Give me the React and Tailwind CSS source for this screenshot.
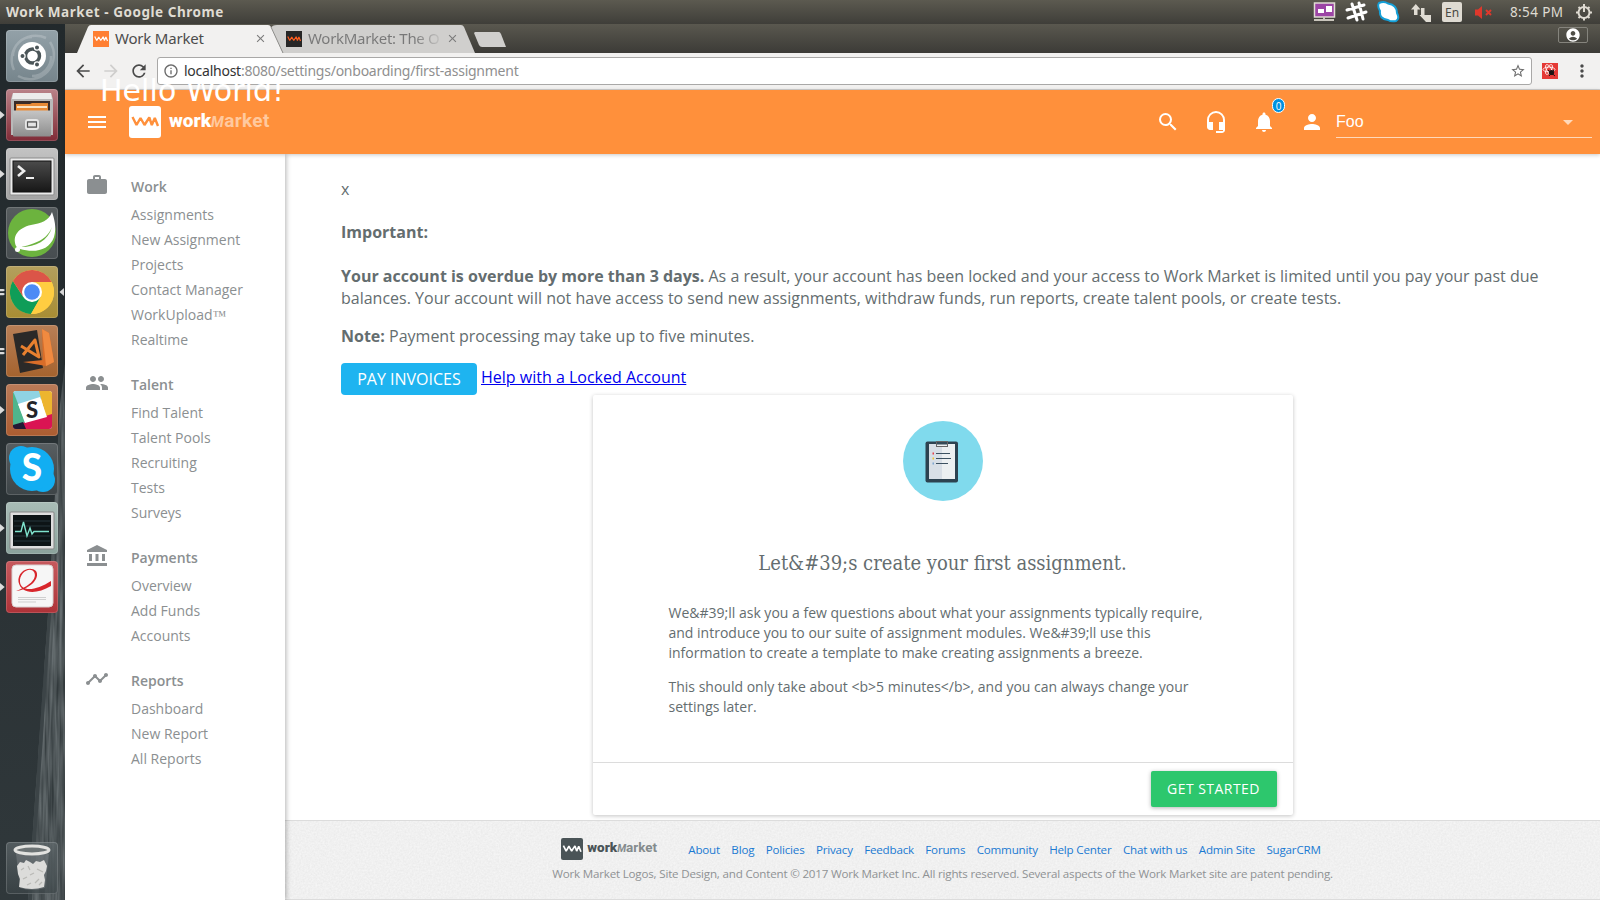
import React from "react";
import {
  MdMenu, MdSearch, MdHeadsetMic, MdNotifications, MdPerson, MdArrowDropDown, MdWork, MdPeople,
  MdAccountBalance, MdTimeline, MdInfoOutline, MdStarBorder, MdArrowBack, MdArrowForward, MdRefresh,
  MdMoreVert, MdAccountCircle, MdClose,
} from "react-icons/md";

const groups = [
  { title: "Work", Icon: MdWork, items: ["Assignments", "New Assignment", "Projects", "Contact Manager", "WorkUpload™", "Realtime"] },
  { title: "Talent", Icon: MdPeople, items: ["Find Talent", "Talent Pools", "Recruiting", "Tests", "Surveys"] },
  { title: "Payments", Icon: MdAccountBalance, items: ["Overview", "Add Funds", "Accounts"] },
  { title: "Reports", Icon: MdTimeline, items: ["Dashboard", "New Report", "All Reports"] },
];

const footerLinks = ["About", "Blog", "Policies", "Privacy", "Feedback", "Forums", "Community", "Help Center", "Chat with us", "Admin Site", "SugarCRM"];

function WmMark({ bg, fg, radius, className }) {
  return (
    <svg viewBox="0 0 32 32" className={className}>
      <rect width="32" height="32" rx={radius} fill={bg} />
      <path d="M3.500 11 L7.500 19 L11.500 12 L15.500 19 L20.300 11.500 L22.800 19 L25.800 12 L29 20" fill="none" stroke={fg} strokeWidth="2.400" strokeLinejoin="bevel" />
    </svg>
  );
}

function UbuntuIcon() {
  return (
    <g>
      <path d="M8 40 A24 24 0 0 1 40 8 M44 12 A24 24 0 0 1 12 46 M7 26 A19 19 0 0 1 26 7 M45 26 A19 19 0 0 1 26 46" fill="none" stroke="#fff" strokeOpacity=".2" strokeWidth="2.500" />
      <circle cx="26" cy="26" r="14" fill="#fff" />
      <circle cx="26.500" cy="26" r="7" fill="none" stroke="#4b5558" strokeWidth="3.400" />
      <g fill="#4b5558" stroke="#fff" strokeWidth="1.200">
        <circle cx="16.500" cy="26" r="2.600" /><circle cx="31" cy="17.500" r="2.600" /><circle cx="31" cy="34.500" r="2.600" />
      </g>
    </g>
  );
}
function FilesIcon() {
  return (
    <g>
      <path d="M7 4 H45 L47 10 V46 H5 V10 Z" fill="#b9b9b9" />
      <path d="M7 4 H45 L46 10 H6 Z" fill="#ececec" />
      <rect x="8" y="12" width="36" height="10" fill="#3a2c28" />
      <path d="M10 15 H24 L26 14 H42 V22 H10 Z" fill="#e98a35" />
      <rect x="11" y="17" width="30" height="2" fill="#fbe3c3" />
      <rect x="7" y="21.500" width="38" height="26" rx="1" fill="url(#steel)" />
      <rect x="20" y="31" width="12" height="9" rx="2" fill="none" stroke="#e6e6e6" strokeWidth="2" />
      <rect x="21.500" y="33" width="9" height="5" fill="#e4e4e4" stroke="#555" strokeWidth="1.200" />
    </g>
  );
}
function TerminalIcon() {
  return (
    <g>
      <rect x="4" y="10" width="44" height="37" rx="1" fill="#ebebeb" stroke="#8b8b8b" />
      <rect x="7" y="13" width="38" height="31" fill="url(#screen)" stroke="#111" />
      <path d="M12 18 L18 23 L12 28" fill="none" stroke="#eee" strokeWidth="2.600" />
      <rect x="20" y="29" width="8" height="2" fill="#eee" />
    </g>
  );
}
function LeafIcon() {
  return (
    <g>
      <circle cx="26" cy="26" r="24" fill="#6cb33e" />
      <path d="M46 5 C43 14 35 16 25 18 C12 21 6 29 10 39 Q11 41 14 42 C28 46 43 44 48 30 C51 20 48 11 46 5 Z" fill="#fff" />
      <path d="M46 20 C42 30 34 36 15 40 C30 40 42 34 46 20 Z" fill="#6cb33e" />
      <circle cx="11.500" cy="42.500" r="2.500" fill="#fff" />
    </g>
  );
}
function ChromeIcon() {
  return (
    <g>
      <circle cx="26" cy="26" r="22" fill="#ffcd41" />
      <path d="M6.900 15 A22 22 0 0 0 25 48 L34.700 31 L26 36 L17.300 31 Z" fill="#0f9d58" />
      <path d="M26 16 H45.600 A22 22 0 0 1 25 48 L34.700 31 Z" fill="#ffcd41" />
      <path d="M6.900 15 A22 22 0 0 1 45.600 16 H26 L17.300 31 Z" fill="#db5548" />
      <circle cx="26" cy="26" r="10" fill="#fff" />
      <circle cx="26" cy="26" r="7.800" fill="#4c8bf5" />
    </g>
  );
}
function CodeIcon() {
  return (
    <g>
      <path d="M7 9 L31 5 L37 43 L14 48 Z" fill="#2b2928" />
      <path d="M36 4 L43 8 L48 37 L40 41 L17 37 L37 35 Z" fill="#d96d29" />
      <path d="M36 4 L43 8 L48 37 L40 41 Z" fill="#f08a40" />
      <path d="M15 21 L33 32 L29 15 L17 30" fill="none" stroke="#e8802f" strokeWidth="3" strokeLinejoin="round" />
    </g>
  );
}
function SlackIcon() {
  return (
    <g>
      <clipPath id="slackClip"><rect x="7" y="7" width="39" height="38" rx="3" /></clipPath>
      <g clipPath="url(#slackClip)">
        <rect x="7" y="7" width="39" height="38" fill="#fff" />
        <path d="M7 7 H35 L38 14 L7 22 Z" fill="#8fd3e3" />
        <path d="M7 7 L22 45 H7 Z" fill="#4fb58c" />
        <path d="M33 7 H46 V31 L40 33 Z" fill="#edb52f" />
        <path d="M7 42 L46 30 V45 H7 Z" fill="#da1453" />
        <path d="M7 41 L17 38 L20 45 H7 Z" fill="#241a35" />
        <path d="M12 20 L34 13 L41 33 L19 39 Z" fill="#fff" />
      </g>
      <text x="26" y="34" textAnchor="middle" fontFamily="Lato" fontWeight="900" fontSize="22" fill="#242428">S</text>
    </g>
  );
}
function SkypeIcon() {
  return (
    <g>
      <circle cx="15" cy="15" r="12" fill="#12aef2" /><circle cx="37" cy="37" r="12" fill="#12aef2" />
      <circle cx="26" cy="26" r="22" fill="#12aef2" />
      <text x="26" y="38" textAnchor="middle" fontFamily="Lato" fontWeight="900" fontSize="37" fill="#fff">S</text>
    </g>
  );
}
function MonitorIcon() {
  return (
    <g>
      <rect x="4" y="10" width="44" height="37" rx="1" fill="#dedede" stroke="#858585" />
      <rect x="7" y="13" width="38" height="31" fill="#0d1416" />
      <path d="M8 19 H44 M8 24 H44 M8 34 H44 M8 39 H44" stroke="#26343a" />
      <path d="M9 29.500 H15 L17.500 20 L21 34 L24 26 L26 32 L28 29.500 H43" fill="none" stroke="#7fe3cd" strokeWidth="1.400" />
    </g>
  );
}
function ReaderIcon() {
  return (
    <g>
      <rect x="6" y="4" width="41" height="42" rx="4" fill="#f6f6f6" stroke="#d8d0d0" />
      <path d="M10 30 C22 26 32 18 28 11 C24 5 13 12 14 21 C15 31 30 30 45 20 V25 C30 34 15 33 12.500 21 C11 10 24 4 30 10 C35 18 22 29 10 30 Z" fill="#d8262c" />
      <path d="M12 36.500 H40 M12 38.500 H40 M12 41 H30" stroke="#cfcfcf" strokeWidth="1" />
    </g>
  );
}
function TrashIcon() {
  return (
    <g>
      <path d="M10 12 L14 46 Q26 50 39 46 L43 12 Z" fill="#9ba0a1" fillOpacity=".3" />
      <path d="M11 24 L14 20 L18 21 L20 18 L24 20 L27 22 L30 19 L34 20 L38 18 L41 24 L40 29 L38 33 L39 38 L38 45 Q26 49 13 45 L14 37 L12 32 Z" fill="#dcdcda" />
      <path d="M15 28 L18 26 M22 24 L24 28 M24 33 L28 31 M31 27 L37 30 M17 37 L21 35 M29 41 L33 37 M21 43 L25 41 M33 43 L36 40" stroke="#b9b9b5" strokeWidth="1.200" fill="none" />
      <ellipse cx="26" cy="8" rx="17" ry="4" fill="#6c7374" stroke="#e2e2df" strokeWidth="3" />
    </g>
  );
}

const launcher = [
  { Icon: UbuntuIcon, tile: "from-[#93a1a8] to-[#76858c]" },
  { Icon: FilesIcon, tile: "from-[#b98289] to-[#7f2a37]", mark: "run" },
  { Icon: TerminalIcon, tile: "from-[#c3c3c3] to-[#a3a3a3]", mark: "run" },
  { Icon: LeafIcon, tile: "from-[#565c5e] to-[#474d50]" },
  { Icon: ChromeIcon, tile: "from-[#b39f5d] to-[#a88d33]", mark: "multi", active: true },
  { Icon: CodeIcon, tile: "from-[#b87f56] to-[#a5632e]", mark: "multi" },
  { Icon: SlackIcon, tile: "from-[#b97b58] to-[#ac5d31]", mark: "run" },
  { Icon: SkypeIcon, tile: "from-[#585e61] to-[#3d4447]" },
  { Icon: MonitorIcon, tile: "from-[#a9bdb7] to-[#8ba39c]", mark: "run" },
  { Icon: ReaderIcon, tile: "from-[#c5595d] to-[#ad3238]", mark: "run" },
];

function Tile({ Icon, tile, mark, active }) {
  return (
    <div className="flex h-[52px] w-[65px] items-center">
      <div className="w-1.5 shrink-0">
        <svg viewBox="0 0 6 12" className="h-3 w-[6px]">
          {mark === "run" && <path d="M0 2 L4.700 6 L0 10 Z" fill="#dcdcdc" />}
          {mark === "multi" && <path d="M0 3 H3.500 L5 4 L3.500 5.200 H0 Z M0 7 H3.500 L5 8 L3.500 9.200 H0 Z" fill="#dcdcdc" />}
        </svg>
      </div>
      <div className={`h-[52px] w-[52px] shrink-0 rounded bg-linear-to-b ${tile} shadow-[inset_0_0_0_1px_rgba(255,255,255,0.16)]`}>
        <svg viewBox="0 0 52 52" className="h-full w-full"><Icon /></svg>
      </div>
      <svg viewBox="0 0 7 12" className="h-3 w-[7px]">{active && <path d="M6 2 L1.500 6 L6 10 Z" fill="#dcdcdc" />}</svg>
    </div>
  );
}

function Launcher() {
  return (
    <aside className="relative flex w-[65px] shrink-0 flex-col justify-between bg-linear-to-b from-[#22292c] to-[#30383b] pt-1.5 pb-1.5">
      <svg viewBox="0 0 65 876" className="absolute inset-0 h-full w-full" preserveAspectRatio="none">
        <defs>
          <linearGradient id="steel" x1="0" x2="0" y1="0" y2="1"><stop offset="0" stopColor="#c5c5c5" /><stop offset="1" stopColor="#8d8d8d" /></linearGradient>
          <linearGradient id="screen" x1="0" x2="0" y1="0" y2="1"><stop offset="0" stopColor="#4b4b4b" /><stop offset="1" stopColor="#171717" /></linearGradient>
          <filter id="grain" x="0" y="0" width="1" height="1" colorInterpolationFilters="sRGB">
            <feTurbulence type="fractalNoise" baseFrequency="0.35 0.02" numOctaves="2" result="n" />
            <feColorMatrix in="n" type="matrix" values="0.35 0 0 0 0.13 0.35 0 0 0 0.16 0.35 0 0 0 0.17 0 0 0 0 1" result="g" />
            <feComposite in="g" in2="SourceGraphic" operator="in" />
          </filter>
        </defs>
        <path d="M60 380 L65 340 V876 H28 L49 576 Z" fill="#4d5558" filter="url(#grain)" />
        <path d="M49 576 L28 876 H32 L52 576 Z" fill="#3c4447" />
      </svg>
      <div className="relative flex flex-col gap-[7px]">
        {launcher.map((entry, i) => <Tile key={i} {...entry} />)}
      </div>
      <div className="relative">
        <Tile Icon={TrashIcon} tile="from-[#626b6e]/70 to-[#3c4548]/70" />
      </div>
    </aside>
  );
}

function SystemBar() {
  return (
    <div className="flex h-6 shrink-0 items-center justify-between bg-linear-to-b from-[#5c5a50] to-[#3f3e39] pr-1.5 pl-1.5 font-['Noto_Sans',sans-serif] text-[#dfdbd2]">
      <span className="text-[13.500px] font-bold tracking-[0.540px] whitespace-nowrap">Work Market - Google Chrome</span>
      <svg viewBox="1310 0 284 24" className="h-6 w-[284px]">
        <rect x="1314.500" y="3" width="20" height="14" fill="#9c45a5" stroke="#e0dcd3" strokeWidth="1.500" />
        <rect x="1318" y="9" width="6" height="4" fill="#fff" /><rect x="1326" y="6" width="6" height="6" fill="#fff" />
        <path d="M1324 17 V19 M1314 20 H1334" stroke="#c9c5bc" strokeWidth="2" />
        <path d="M1352 4 L1357 20 M1359 3 L1363 19 M1347 10 L1364 5 M1348 18 L1366 12" stroke="#fff" strokeWidth="3" strokeLinecap="round" />
        <path d="M1379 3 Q1384 1 1388 3.500 Q1397 5 1397 13 Q1400 19 1396 21 Q1391 22 1388 20 Q1379 19 1380 11 Q1377 6 1379 3 Z" fill="#fff" stroke="#15a0d8" strokeWidth="2" />
        <path d="M1411 9.500 L1415.800 4 L1420.500 9.500 H1417.500 V15 H1414 V9.500 Z" fill="#e0dcd3" />
        <path d="M1421 8 H1424.500 V15 H1427 L1431 15 V22 H1426 L1419.500 15 H1421 Z" fill="#e0dcd3" />
        <rect x="1442" y="2" width="20" height="20" rx="2" fill="#dfdbd2" />
        <text x="1452" y="17" textAnchor="middle" fontFamily="Noto Sans" fontSize="12" fill="#4a4943">En</text>
        <path d="M1475 9.500 H1478 L1482 6 V19 L1478 15.500 H1475 Z" fill="#df382c" />
        <path d="M1486 10 L1491 15 M1491 10 L1486 15" stroke="#df382c" strokeWidth="2" />
        <text x="1510" y="17.300" fontFamily="Noto Sans" fontSize="13.500" textLength="53" fill="#dfdbd2">8:54 PM</text>
        <circle cx="1584" cy="12.500" r="5.500" fill="none" stroke="#dfdbd2" strokeWidth="2" />
        <path d="M1584 4 V12 M1576 12.500 H1579 M1589 12.500 H1592 M1578.500 18 L1580 16.500 M1589.500 18 L1588 16.500 M1584 18 V20.500 M1578.500 7 L1580 8.500 M1589.500 7 L1588 8.500" stroke="#dfdbd2" strokeWidth="2" />
      </svg>
    </div>
  );
}

function TabStrip() {
  return (
    <div className="relative flex h-[29px] shrink-0 bg-linear-to-b from-[#5a584f] to-[#3c3b37] pl-3 font-['Noto_Sans',sans-serif] text-[15px]">
      <svg viewBox="65 24 460 29" className="absolute top-0 left-0 h-[29px] w-[460px]">
        <path d="M283 53 L271 28 Q272 25 277 25 H461 Q463 25 464 27 L475 53 Z" fill="#d0cfcd" />
        <path d="M77 53 L88 27 Q89 25 91 25 H268 Q270 25 271 27 L283 53 Z" fill="#f2f1f0" />
        <path d="M271 27 L283 53" stroke="#8f8e8b" />
        <path d="M475 32 H499 Q500 32 501 34 L506 47 H482 Q480 47 479 45 L474 33 Z" fill="#d0cfcd" />
      </svg>
      <div className="relative flex h-full w-[194px] items-center pl-4">
        <WmMark bg="#ff7f32" fg="#fff" radius="0" className="h-4 w-4" />
        <span className="ml-1.5 w-[139px] tracking-[-0.200px] text-[#4c4c4c]">Work Market</span>
        <MdClose className="h-[13px] w-[13px] text-[#7b7b7b]" />
      </div>
      <div className="relative flex h-full w-[200px] items-center pl-[15px]">
        <WmMark bg="#262626" fg="#ff5e1f" radius="0" className="h-4 w-4" />
        <span className="ml-1.5 w-[133px] bg-linear-to-r from-[#787878] from-80% to-[#787878]/10 bg-clip-text tracking-[-0.300px] whitespace-nowrap text-transparent">WorkMarket: The O</span>
        <MdClose className="ml-[5px] h-[13px] w-[13px] text-[#7b7b7b]" />
      </div>
      <div className="mt-[3px] mr-3 ml-auto flex h-4 w-[30px] items-center justify-center rounded-[2px] border border-[#85847d]">
        <MdAccountCircle className="h-4 w-4 text-white" />
      </div>
    </div>
  );
}

function Toolbar() {
  return (
    <div className="flex h-[37px] shrink-0 items-center border-b border-[#d0cfce] bg-[#f2f1f0] pl-2 font-['Noto_Sans',sans-serif] text-[#4a4a4a]">
      <MdArrowBack className="h-5 w-5" />
      <MdArrowForward className="ml-2 h-5 w-5 text-[#cfcecd]" />
      <MdRefresh className="ml-2 h-5 w-5" />
      <div className="ml-2 flex h-7 w-[1375px] items-center rounded-[3px] border border-[#a9a8a7] bg-white pr-[5px] pl-[5px]">
        <MdInfoOutline className="h-4 w-4 text-[#6a6a6a]" />
        <span className="ml-[5px] flex-1 pb-0.5 text-[14px] tracking-[-0.250px] text-[#8f8f8f]"><span className="text-[#333]">localhost</span>:8080/settings/onboarding/first-assignment</span>
        <MdStarBorder className="h-4 w-4 text-[#6d6d6d]" />
      </div>
      <svg viewBox="0 0 16 16" className="ml-2.5 h-4 w-4">
        <rect width="16" height="16" fill="#e53935" />
        <g fill="none" stroke="#fff" strokeWidth=".8"><ellipse cx="7" cy="6.500" rx="6" ry="2.400" /><ellipse cx="7" cy="6.500" rx="5.500" ry="2.400" transform="rotate(60 7 6.500)" /><ellipse cx="7" cy="6.500" rx="5.500" ry="2.400" transform="rotate(120 7 6.500)" /></g>
        <circle cx="9.500" cy="9.500" r="2.600" fill="#1d1313" /><path d="M6 7 L13 13 M12 7 L7 13" stroke="#1d1313" />
      </svg>
      <MdMoreVert className="ml-3.5 h-5 w-5" />
    </div>
  );
}

function AppHeader() {
  return (
    <header className="relative z-10 flex h-16 shrink-0 items-center bg-[#ff903b] pl-5 text-white shadow-[0_1px_4px_rgba(0,0,0,0.22)]">
      <MdMenu className="h-6 w-6" />
      <WmMark bg="#fff" fg="#ff903b" radius="3" className="ml-5 h-8 w-8" />
      <div className="-mt-0.5 ml-2 flex items-baseline font-['Roboto',sans-serif] text-[19px] leading-5 font-bold">
        <span className="font-black">work</span>
        <span className="tracking-[0.350px] text-[#ffc99f]"><span className="text-[15px] italic">M</span>arket</span>
      </div>
      <span className="absolute top-[-17px] left-[35px] font-['DejaVu_Sans',sans-serif] text-[30px] leading-9 tracking-[0.050px] whitespace-nowrap">Hello World!</span>
      <div className="ml-auto flex items-center">
        <MdSearch className="h-6 w-6" />
        <MdHeadsetMic className="ml-6 h-6 w-6" />
        <div className="relative ml-6">
          <MdNotifications className="h-6 w-6" />
          <span className="absolute -top-3 left-5 flex h-[15px] w-[13px] items-center justify-center rounded-full border border-white bg-[#0091e0] font-['Open_Sans',sans-serif] text-[10px] leading-none">0</span>
        </div>
        <MdPerson className="ml-6 h-6 w-6" />
        <div className="mr-2 ml-3 flex h-[31px] w-64 items-center justify-between border-b border-[#ffd9bb] pr-3 font-['Liberation_Sans',sans-serif] text-base">
          <span>Foo</span>
          <MdArrowDropDown className="h-6 w-6 text-[#ffd9bb]" />
        </div>
      </div>
    </header>
  );
}

function Sidebar() {
  return (
    <nav className="z-[5] w-[220px] shrink-0 bg-white pt-[18px] text-sm text-[#8b8f91] shadow-[1px_0_5px_rgba(0,0,0,0.3)]">
      {groups.map(({ title, Icon, items }) => (
        <section key={title} className="mb-[18px] flex pl-5">
          <Icon className="mt-px h-6 w-6 shrink-0" />
          <div className="ml-[22px]">
            <h2 className="h-[30px] leading-[30px] font-semibold">{title}</h2>
            <ul>
              {items.map((item) => (
                <li key={item} className="h-[25px] leading-[25px]">
                  {item.replace("™", "")}
                  {item.endsWith("™") && <span className="font-['Liberation_Serif',serif]">™</span>}
                </li>
              ))}
            </ul>
          </div>
        </section>
      ))}
    </nav>
  );
}

function Clipboard() {
  return (
    <svg viewBox="0 0 80 80" className="h-20 w-20">
      <circle cx="40" cy="40" r="40" fill="#80daed" />
      <rect x="22.500" y="20.500" width="32.500" height="41" rx="2" fill="#2c4250" />
      <rect x="26" y="23" width="13" height="35" fill="#d8dfe6" />
      <rect x="39" y="23" width="13" height="35" fill="#ecf0f1" />
      <rect x="33.500" y="20.500" width="11" height="5" fill="#ecf0f1" stroke="#666" />
      <rect x="34" y="21" width="10" height="2.500" fill="#344a57" />
      <path d="M33 32.500 H47 M33 37.500 H48 M33 42.500 H45" stroke="#3c5261" />
      <rect x="29.500" y="31.500" width="1.500" height="2" fill="#e5404b" /><rect x="29.500" y="36.500" width="1.500" height="2" fill="#f4c430" /><rect x="29.500" y="41.500" width="1.500" height="2" fill="#7ea6d0" />
    </svg>
  );
}

function OnboardingCard() {
  return (
    <div className="mx-auto flex h-[420px] w-[700px] flex-col rounded-[2px] bg-white shadow-[0_1px_4px_rgba(0,0,0,0.24)]">
      <div className="flex flex-1 flex-col items-center pt-[26px]">
        <Clipboard />
        <h1 className="mt-[47px] font-['DejaVu_Serif_Condensed','DejaVu_Serif',serif] text-[20px] leading-[30px] whitespace-nowrap">Let&amp;#39;s create your first assignment.</h1>
        <div className="mt-[25px] ml-0.5 w-[550px] text-sm leading-5">
          <p>We&amp;#39;ll ask you a few questions about what your assignments typically require, and introduce you to our suite of assignment modules. We&amp;#39;ll use this information to create a template to make creating assignments a breeze.</p>
          <p className="mt-3.5">This should only take about &lt;b&gt;5 minutes&lt;/b&gt;, and you can always change your settings later.</p>
        </div>
      </div>
      <div className="flex h-[53px] items-start justify-end border-t border-[#dcdcdc] pt-2 pr-4">
        <button className="h-9 w-[126px] rounded-[2px] bg-[#2dc76d] text-sm tracking-[0.450px] text-white shadow-[0_1px_4px_rgba(0,0,0,0.3)]">GET STARTED</button>
      </div>
    </div>
  );
}

function Footer() {
  return (
    <footer className="relative flex h-20 shrink-0 flex-col items-center border-t border-b border-[#dcdcdc] bg-[#f8f8f8] pt-[17px] text-[11.600px] tracking-[-0.190px]">
      <svg className="absolute inset-0 h-full w-full opacity-[0.060]">
        <filter id="paper" colorInterpolationFilters="sRGB"><feTurbulence type="fractalNoise" baseFrequency="0.55" numOctaves="2" /><feColorMatrix type="matrix" values="1 0 0 0 0 1 0 0 0 0 1 0 0 0 0 0 0 0 0 1" /></filter>
        <rect width="100%" height="100%" filter="url(#paper)" />
      </svg>
      <div className="relative mr-[3px] flex h-[22px] items-center">
        <WmMark bg="#4a5457" fg="#fff" radius="3" className="h-[22px] w-[22px]" />
        <div className="-mt-0.5 ml-1 flex w-[72px] items-baseline font-['Roboto',sans-serif] text-[13.500px] leading-4 font-bold tracking-normal">
          <span className="font-black text-[#4a5457]">work</span>
          <span className="text-[#848b8d]"><span className="text-[10.500px] italic">M</span>arket</span>
        </div>
        <div className="mt-px ml-[29px] flex gap-[11.400px] text-[#1b7ad2]">
          {footerLinks.map((link) => <a key={link} className="whitespace-nowrap">{link}</a>)}
        </div>
      </div>
      <p className="relative mt-1 leading-5 text-[#8f9294]">Work Market Logos, Site Design, and Content © 2017 Work Market Inc. All rights reserved. Several aspects of the Work Market site are patent pending.</p>
    </footer>
  );
}

export default function App() {
  return (
    <div className="flex h-[900px] w-[1600px] flex-col overflow-hidden bg-white">
      <SystemBar />
      <div className="flex min-h-0 flex-1">
        <Launcher />
        <div className="flex min-w-0 flex-1 flex-col">
          <TabStrip />
          <Toolbar />
          <AppHeader />
          <div className="flex min-h-0 flex-1 font-['Open_Sans',sans-serif] text-[#646d6f]">
            <Sidebar />
            <div className="flex min-w-0 flex-1 flex-col">
              <main className="flex-1 pt-6 leading-[22px]">
                <div className="h-[217px] px-14 text-base leading-[22px]">
                  <p>x</p>
                  <p className="mt-[21px] font-bold">Important:</p>
                  <p className="mt-[22px]"><b>Your account is overdue by more than 3 days.</b> As a result, your account has been locked and your access to Work Market is limited until you pay your past due balances. Your account will not have access to send new assignments, withdraw funds, run reports, create talent pools, or create tests.</p>
                  <p className="mt-4"><b>Note:</b> Payment processing may take up to five minutes.</p>
                  <div className="mt-4 flex">
                    <button className="h-8 w-[136px] rounded bg-[#1eb4f0] text-base text-white">PAY INVOICES</button>
                    <a className="mt-[3px] ml-1 text-[#0000ee] underline">Help with a Locked Account</a>
                  </div>
                </div>
                <OnboardingCard />
              </main>
              <Footer />
            </div>
          </div>
        </div>
      </div>
    </div>
  );
}
